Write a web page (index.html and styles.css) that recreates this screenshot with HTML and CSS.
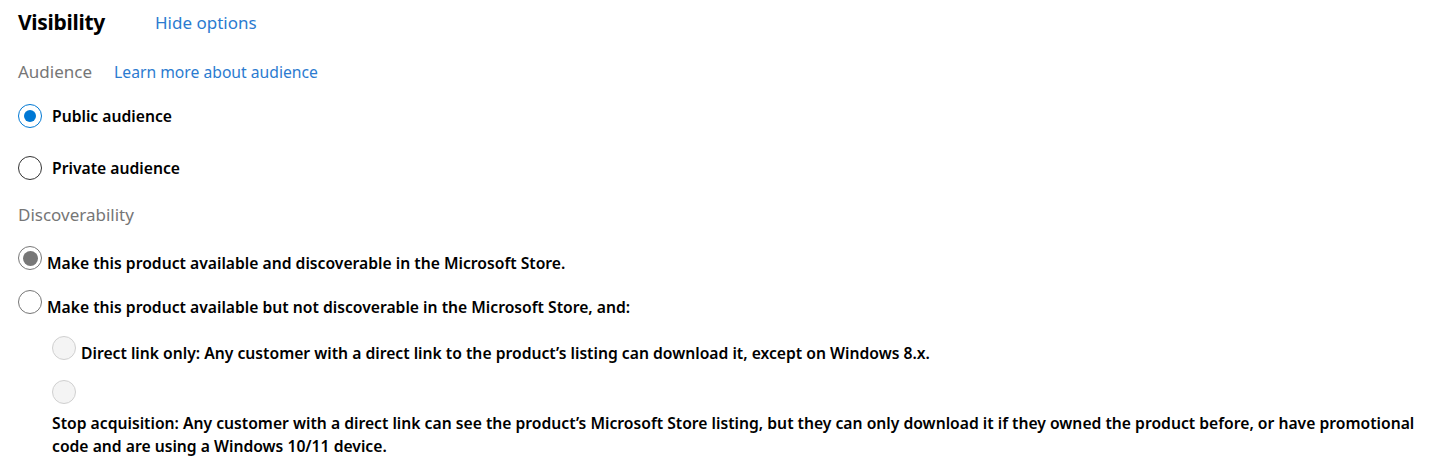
FILE: index.html
```html
<!DOCTYPE html>
<html lang="en">
<head>
<meta charset="utf-8">
<title>Visibility</title>
<link rel="stylesheet" href="styles.css">
</head>
<body>
<div class="page">
  <div class="header">
    <h2 class="title">Visibility</h2>
    <a class="link hide-link" href="#">Hide options</a>
  </div>

  <div class="section-label">
    <span class="muted">Audience</span>
    <a class="link" href="#">Learn more about audience</a>
  </div>

  <div class="choice choice-first">
    <span class="radio radio-blue"><span class="dot"></span></span>
    <span class="choice-text">Public audience</span>
  </div>
  <div class="choice choice-second">
    <span class="radio radio-dark"></span>
    <span class="choice-text">Private audience</span>
  </div>

  <div class="section-label discover-label">
    <span class="muted">Discoverability</span>
  </div>

  <div class="inline-choice inline-first">
    <span class="radio radio-gray"><span class="dot dot-gray"></span></span><span class="inline-text">Make this product available and discoverable in the Microsoft Store.</span>
  </div>
  <div class="inline-choice inline-second">
    <span class="radio radio-mid"></span><span class="inline-text">Make this product available but not discoverable in the Microsoft Store, and:</span>
  </div>

  <div class="sub-options">
    <div class="inline-choice sub-first">
      <span class="radio radio-disabled"></span><span class="inline-text">Direct link only: Any customer with a direct link to the product’s listing can download it, except on Windows 8.x.</span>
    </div>
    <div class="stacked-choice">
      <span class="radio radio-disabled"></span>
      <p class="stacked-text">Stop acquisition: Any customer with a direct link can see the product’s Microsoft Store listing, but they can only download it if they owned the product before, or have promotional code and are using a Windows 10/11 device.</p>
    </div>
  </div>
</div>
</body>
</html>
```

FILE: styles.css
```css
* { box-sizing: border-box; }
html, body { margin: 0; padding: 0; background: #ffffff; }
body {
  font-family: "Segoe UI", "Noto Sans", "Open Sans", sans-serif;
  color: #000000;
  font-size: 15.7px;
}
.page {
  padding: 8px 8px 0 18px;
}
.header {
  display: flex;
  align-items: baseline;
  gap: 50px;
  height: 30px;
}
.title {
  margin: 0;
  font-size: 21px;
  font-weight: 700;
  line-height: 28px;
  letter-spacing: -0.3px;
}
.link {
  color: #2b7bd0;
  text-decoration: none;
  font-size: 15.7px;
}
.hide-link {
  font-size: 17px;
  position: relative;
  top: -1px;
}
.section-label {
  display: flex;
  align-items: baseline;
  gap: 22px;
  margin-top: 20px;
  height: 28px;
  line-height: 28px;
}
.muted {
  color: #767676;
  font-size: 17px;
}
.choice {
  display: flex;
  align-items: center;
  gap: 10px;
  height: 28px;
}
.choice-first { margin-top: 16px; }
.choice-second { margin-top: 24px; }
.choice-text {
  font-weight: 600;
  font-size: 15.7px;
}
.discover-label { margin-top: 19px; }

.radio {
  flex: none;
  width: 24px;
  height: 24px;
  border-radius: 50%;
  border: 1px solid #333333;
  display: inline-flex;
  align-items: center;
  justify-content: center;
  background: #ffffff;
}
.radio-blue { border: 1.5px solid #0078d4; }
.dot {
  width: 12px;
  height: 12px;
  border-radius: 50%;
  background: #0078d4;
}
.radio-gray { border: 1.5px solid #777777; }
.dot-gray {
  width: 15px;
  height: 15px;
  background: #777777;
}
.radio-mid { border: 1px solid #767676; }
.radio-disabled {
  border: 1px solid #d0d0d0;
  background: #f4f4f4;
}
.inline-choice {
  display: flex;
  align-items: flex-end;
  gap: 5px;
}
.inline-text {
  font-weight: 600;
  font-size: 15.7px;
  line-height: 18px;
  position: relative;
  top: 2px;
}
.inline-first { margin-top: 17px; }
.inline-second { margin-top: 20px; }
.sub-options {
  padding-left: 34px;
}
.sub-first { margin-top: 22px; }
.stacked-choice {
  margin-top: 20px;
}
.stacked-choice .radio { display: block; }
.stacked-text {
  margin: 8px 0 0 0;
  font-weight: 600;
  font-size: 15.7px;
  line-height: 23px;
}
```
